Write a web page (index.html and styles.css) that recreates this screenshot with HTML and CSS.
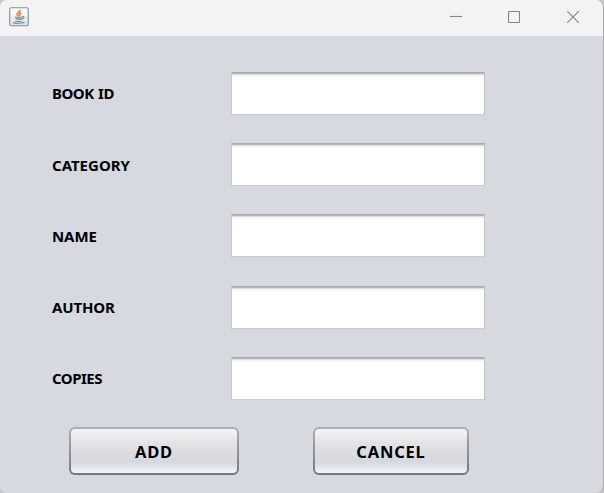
FILE: index.html
```
<!DOCTYPE html>
<html lang="en">
<head>
<meta charset="utf-8">
<title>Add book</title>
<link rel="stylesheet" href="styles.css">
</head>
<body>
<main class="window">
  <header class="titlebar">
    <svg class="java" width="20" height="20" viewBox="0 0 20 20" fill="none">
      <defs><linearGradient id="tile" x2="0" y2="1"><stop stop-color="#fff"/><stop offset="1" stop-color="#dce2e6"/></linearGradient></defs>
      <rect x=".75" y=".75" width="18.5" height="18" rx="1.5" fill="url(#tile)" stroke="#7890a1" stroke-width="1.1"/>
      <path d="M10.8 3c.6 2.300-3.800 2.900-2.500 4.700l1.400 1.800M12.200 5.500c-2.600.9-1.200 2-1.700 3.700" stroke="#ed8a43" stroke-width="1.900"/>
      <path d="M5.500 9.700h7.500v2.200c-.7 1.500-5.600 1.500-6.400 0L5.500 9.700z" fill="#86a3b6"/>
      <path d="M13 9.600c3-.4 2.300 2.200-.5 2.500M6.300 13.900c2 .8 4.500.7 6.300 0M4 15.300c1.300 1.400 9.300 1.300 11.500-.1" stroke="#6688a0" stroke-width="1.100"/>
    </svg>
    <div class="controls">
      <svg width="12" height="12" viewBox="0 0 12 12"><path d="M0 5.500h12"/></svg>
      <svg width="12" height="12" viewBox="0 0 12 12"><rect x=".5" y=".5" width="11" height="11" rx="1"/></svg>
      <svg width="12" height="12" viewBox="0 0 12 12"><path d="M.3.300l11.400 11.400M11.700.3L.3 11.700"/></svg>
    </div>
  </header>
  <form class="form">
    <label class="row"><span class="label book">BOOK ID</span><input class="field" type="text"></label>
    <label class="row"><span class="label category">CATEGORY</span><input class="field" type="text"></label>
    <label class="row"><span class="label name">NAME</span><input class="field" type="text"></label>
    <label class="row"><span class="label author">AUTHOR</span><input class="field" type="text"></label>
    <label class="row"><span class="label copies">COPIES</span><input class="field" type="text"></label>
  </form>
  <div class="actions">
    <button class="button add" type="button">ADD</button>
    <button class="button cancel" type="button">CANCEL</button>
  </div>
</main>
</body>
</html>
```
FILE: styles.css
```
* { box-sizing: border-box; }
body { margin: 0; background: #c6c8cc; overflow: hidden; }
.window {
  width: 604px;
  height: 493px;
  background: #d6d9e0;
  border-right: 1px solid #a6a8ac;
  border-radius: 7px 8px 8px 7px;
  overflow: hidden;
  font-family: "Noto Sans", "Open Sans", sans-serif;
  font-weight: 700;
  color: #000;
}
.titlebar {
  height: 36px;
  padding: 7px 24px 0 9px;
  display: flex;
  justify-content: space-between;
  background: #f3f3f3;
}
.java { display: block; }
.controls {
  display: flex;
  gap: 47px;
  padding-top: 4px;
  fill: none;
  stroke: #858585;
  stroke-width: 1.1;
}
.controls svg:first-child { margin-right: -1px; }
.form { padding: 36px 0 0 52px; }
.row { display: flex; align-items: center; height: 43px; margin-bottom: 28.200px; }
.label { width: 179px; font-size: 15px; line-height: 20px; padding-bottom: 1px; white-space: nowrap; }
.book { letter-spacing: -.5px; word-spacing: 1px; }
.category { letter-spacing: 0; padding-bottom: 0; }
.name { letter-spacing: -.1px; padding-bottom: 0; }
.author { letter-spacing: -.15px; }
.copies { letter-spacing: -.5px; }
.field {
  width: 254px;
  height: 43px;
  padding: 8px;
  border: 1px solid #c9cbcd;
  border-top-color: #a9abae;
  background: linear-gradient(#b8b8b8 0 1px, #dedede 1px 2px, #f3f3f3 2px 3px, #fff 4px);
  border-right-color: #bfc1c3;
  outline: none;
}
.actions { display: flex; gap: 74px; padding: 0 0 0 69px; }
.button {
  height: 48px;
  margin-top: -1px;
  padding: 2px 0 0;
  border: 2px solid transparent;
  border-radius: 6px;
  background: linear-gradient(#f3f4f5, #e1e2e5 35%, #d5d8df 72%, #d9dce3 80%, #f1f4fa) padding-box,
    linear-gradient(#acafb3, #74777b) border-box;
  font: 700 16.500px/20px "Noto Sans", "Open Sans", sans-serif;
  letter-spacing: .8px;
  color: #000;
}
.add { width: 170px; }
.cancel { width: 156px; }
```
